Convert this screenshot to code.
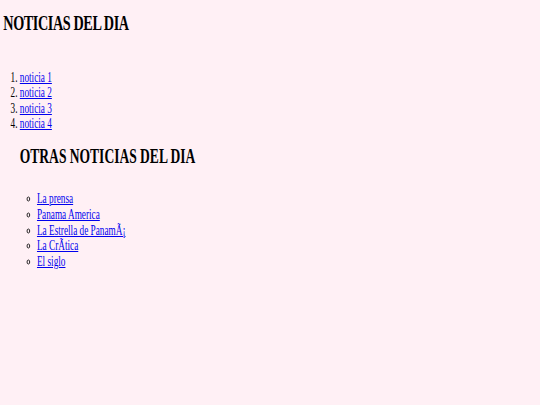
export default function App() {
  const serif = { fontFamily: '"Liberation Serif", "Times New Roman", serif' };
  return (
    <div className="w-[540px] h-[405px] bg-[#fff0f5] overflow-hidden text-black" style={serif}>
      <div className="origin-top-left scale-x-[0.66] w-[818px]">
        <h1 className="pt-[10px] pl-[5px] text-[21.5px] leading-[26px] font-bold tracking-[-0.6px]">NOTICIAS DEL DIA</h1>
        <ol className="mt-[33.5px] pl-[30px] list-decimal text-[14px] leading-[15.5px]">
          <li><a href="#" className="text-[#0000ee] underline">noticia 1</a></li>
          <li><a href="#" className="text-[#0000ee] underline">noticia 2</a></li>
          <li><a href="#" className="text-[#0000ee] underline">noticia 3</a></li>
          <li><a href="#" className="text-[#0000ee] underline">noticia 4</a></li>
        </ol>
        <h2 className="mt-[12px] pl-[30px] text-[20.5px] leading-[24px] font-bold">OTRAS NOTICIAS DEL DIA</h2>
        <ul className="mt-[23.5px] pl-[56px] list-[circle] text-[14px] leading-[15.75px]">
          <li><a href="#" className="text-[#0000ee] underline">La prensa</a></li>
          <li><a href="#" className="text-[#0000ee] underline">Panama America</a></li>
          <li><a href="#" className="text-[#0000ee] underline">La Estrella de PanamÃ¡</a></li>
          <li><a href="#" className="text-[#0000ee] underline">La CrÃ­tica</a></li>
          <li><a href="#" className="text-[#0000ee] underline">El siglo</a></li>
        </ul>
      </div>
    </div>
  );
}
